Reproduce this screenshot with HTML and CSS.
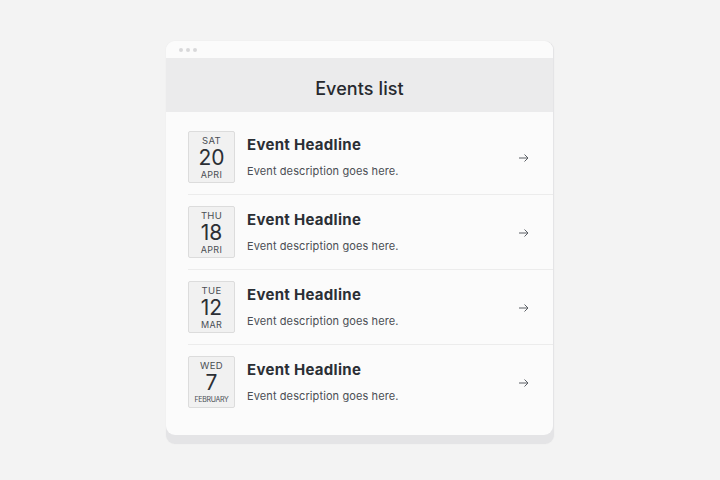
FILE: index.html
```html
<!DOCTYPE html>
<html>
<head>
<meta charset="utf-8">
<link rel="stylesheet" href="styles.css">
</head>
<body>
<div class="stage">
  <div class="card">
    <div class="inner">
      <div class="topbar"><span class="dot"></span><span class="dot"></span><span class="dot"></span></div>
      <div class="header"><h1>Events list</h1></div>
      <ul class="list">
        <li class="row">
          <div class="date"><span class="dow">SAT</span><span class="num">20</span><span class="mon">APRI</span></div>
          <div class="text"><div class="title">Event Headline</div><div class="desc">Event description goes here.</div></div>
          <svg class="arrow" width="11" height="10" viewBox="0 0 11 10"><path d="M1 5H10M6.5 1.5L10 5L6.5 8.5" fill="none" stroke="#5a5e64" stroke-width="1"/></svg>
        </li>
        <li class="row">
          <div class="date"><span class="dow">THU</span><span class="num">18</span><span class="mon">APRI</span></div>
          <div class="text"><div class="title">Event Headline</div><div class="desc">Event description goes here.</div></div>
          <svg class="arrow" width="11" height="10" viewBox="0 0 11 10"><path d="M1 5H10M6.5 1.5L10 5L6.5 8.5" fill="none" stroke="#5a5e64" stroke-width="1"/></svg>
        </li>
        <li class="row">
          <div class="date"><span class="dow">TUE</span><span class="num">12</span><span class="mon">MAR</span></div>
          <div class="text"><div class="title">Event Headline</div><div class="desc">Event description goes here.</div></div>
          <svg class="arrow" width="11" height="10" viewBox="0 0 11 10"><path d="M1 5H10M6.5 1.5L10 5L6.5 8.5" fill="none" stroke="#5a5e64" stroke-width="1"/></svg>
        </li>
        <li class="row">
          <div class="date"><span class="dow">WED</span><span class="num">7</span><span class="mon small">FEBRUARY</span></div>
          <div class="text"><div class="title">Event Headline</div><div class="desc">Event description goes here.</div></div>
          <svg class="arrow" width="11" height="10" viewBox="0 0 11 10"><path d="M1 5H10M6.5 1.5L10 5L6.5 8.5" fill="none" stroke="#5a5e64" stroke-width="1"/></svg>
        </li>
      </ul>
    </div>
  </div>
</div>
</body>
</html>
```
FILE: styles.css
```css
html, body {
  margin: 0;
  padding: 0;
  background: #f3f3f3;
  font-family: Inter, "Noto Sans", sans-serif;
  color: #2b2f35;
}
.stage {
  width: 720px;
  height: 480px;
  display: flex;
  justify-content: center;
  padding-top: 41px;
  box-sizing: border-box;
}
.card {
  width: 388px;
  height: 403px;
  background: #e4e4e6;
  border-radius: 9px;
  box-sizing: border-box;
  padding: 0 1px 9px 0;
  box-shadow: 0 0 2px rgba(0,0,0,0.04);
}
.inner {
  background: #fbfbfb;
  border-radius: 9px;
  height: 100%;
  overflow: hidden;
  display: flex;
  flex-direction: column;
}
.topbar {
  height: 16px;
  display: flex;
  align-items: center;
  gap: 3px;
  padding: 1px 0 0 13px;
  background: #fbfbfb;
}
.dot {
  width: 4px;
  height: 4px;
  border-radius: 50%;
  background: #d8d8da;
}
.header {
  height: 54px;
  box-sizing: border-box;
  padding-top: 7px;
  background: #ebebec;
  display: flex;
  align-items: center;
  justify-content: center;
}
.header h1 {
  margin: 0;
  font-size: 18px;
  font-weight: 500;
  color: #26292e;
  letter-spacing: 0.1px;
}
.list {
  list-style: none;
  margin: 0;
  padding: 8px 0 0 22px;
}
.row {
  display: flex;
  align-items: center;
  padding: 11px 0 11px;
  border-bottom: 1px solid #ececec;
}
.row:last-child {
  border-bottom: none;
}
.date {
  width: 45px;
  height: 50px;
  border: 1px solid #dcdcdc;
  border-radius: 2px;
  background: #f1f1f1;
  display: flex;
  flex-direction: column;
  align-items: center;
  justify-content: center;
  color: #3a3e44;
  flex-shrink: 0;
}
.dow {
  font-size: 9.5px;
  line-height: 11px;
  letter-spacing: 0.3px;
  color: #4a4e54;
}
.num {
  font-size: 21px;
  line-height: 23px;
  color: #2b2f35;
}
.mon {
  font-size: 9px;
  line-height: 11px;
  letter-spacing: 0.3px;
  color: #4a4e54;
}
.mon.small {
  font-size: 7px;
  letter-spacing: -0.3px;
}
.text {
  flex: 1;
  padding-left: 12px;
  display: flex;
  flex-direction: column;
  gap: 10px;
  margin-top: -1px;
}
.title {
  font-size: 15px;
  font-weight: 700;
  letter-spacing: 0.3px;
  color: #2b2f35;
}
.desc {
  font-size: 11px;
  letter-spacing: 0.1px;
  color: #4a4e54;
}
.arrow {
  margin: 2px 24px 0 0;
}
```
